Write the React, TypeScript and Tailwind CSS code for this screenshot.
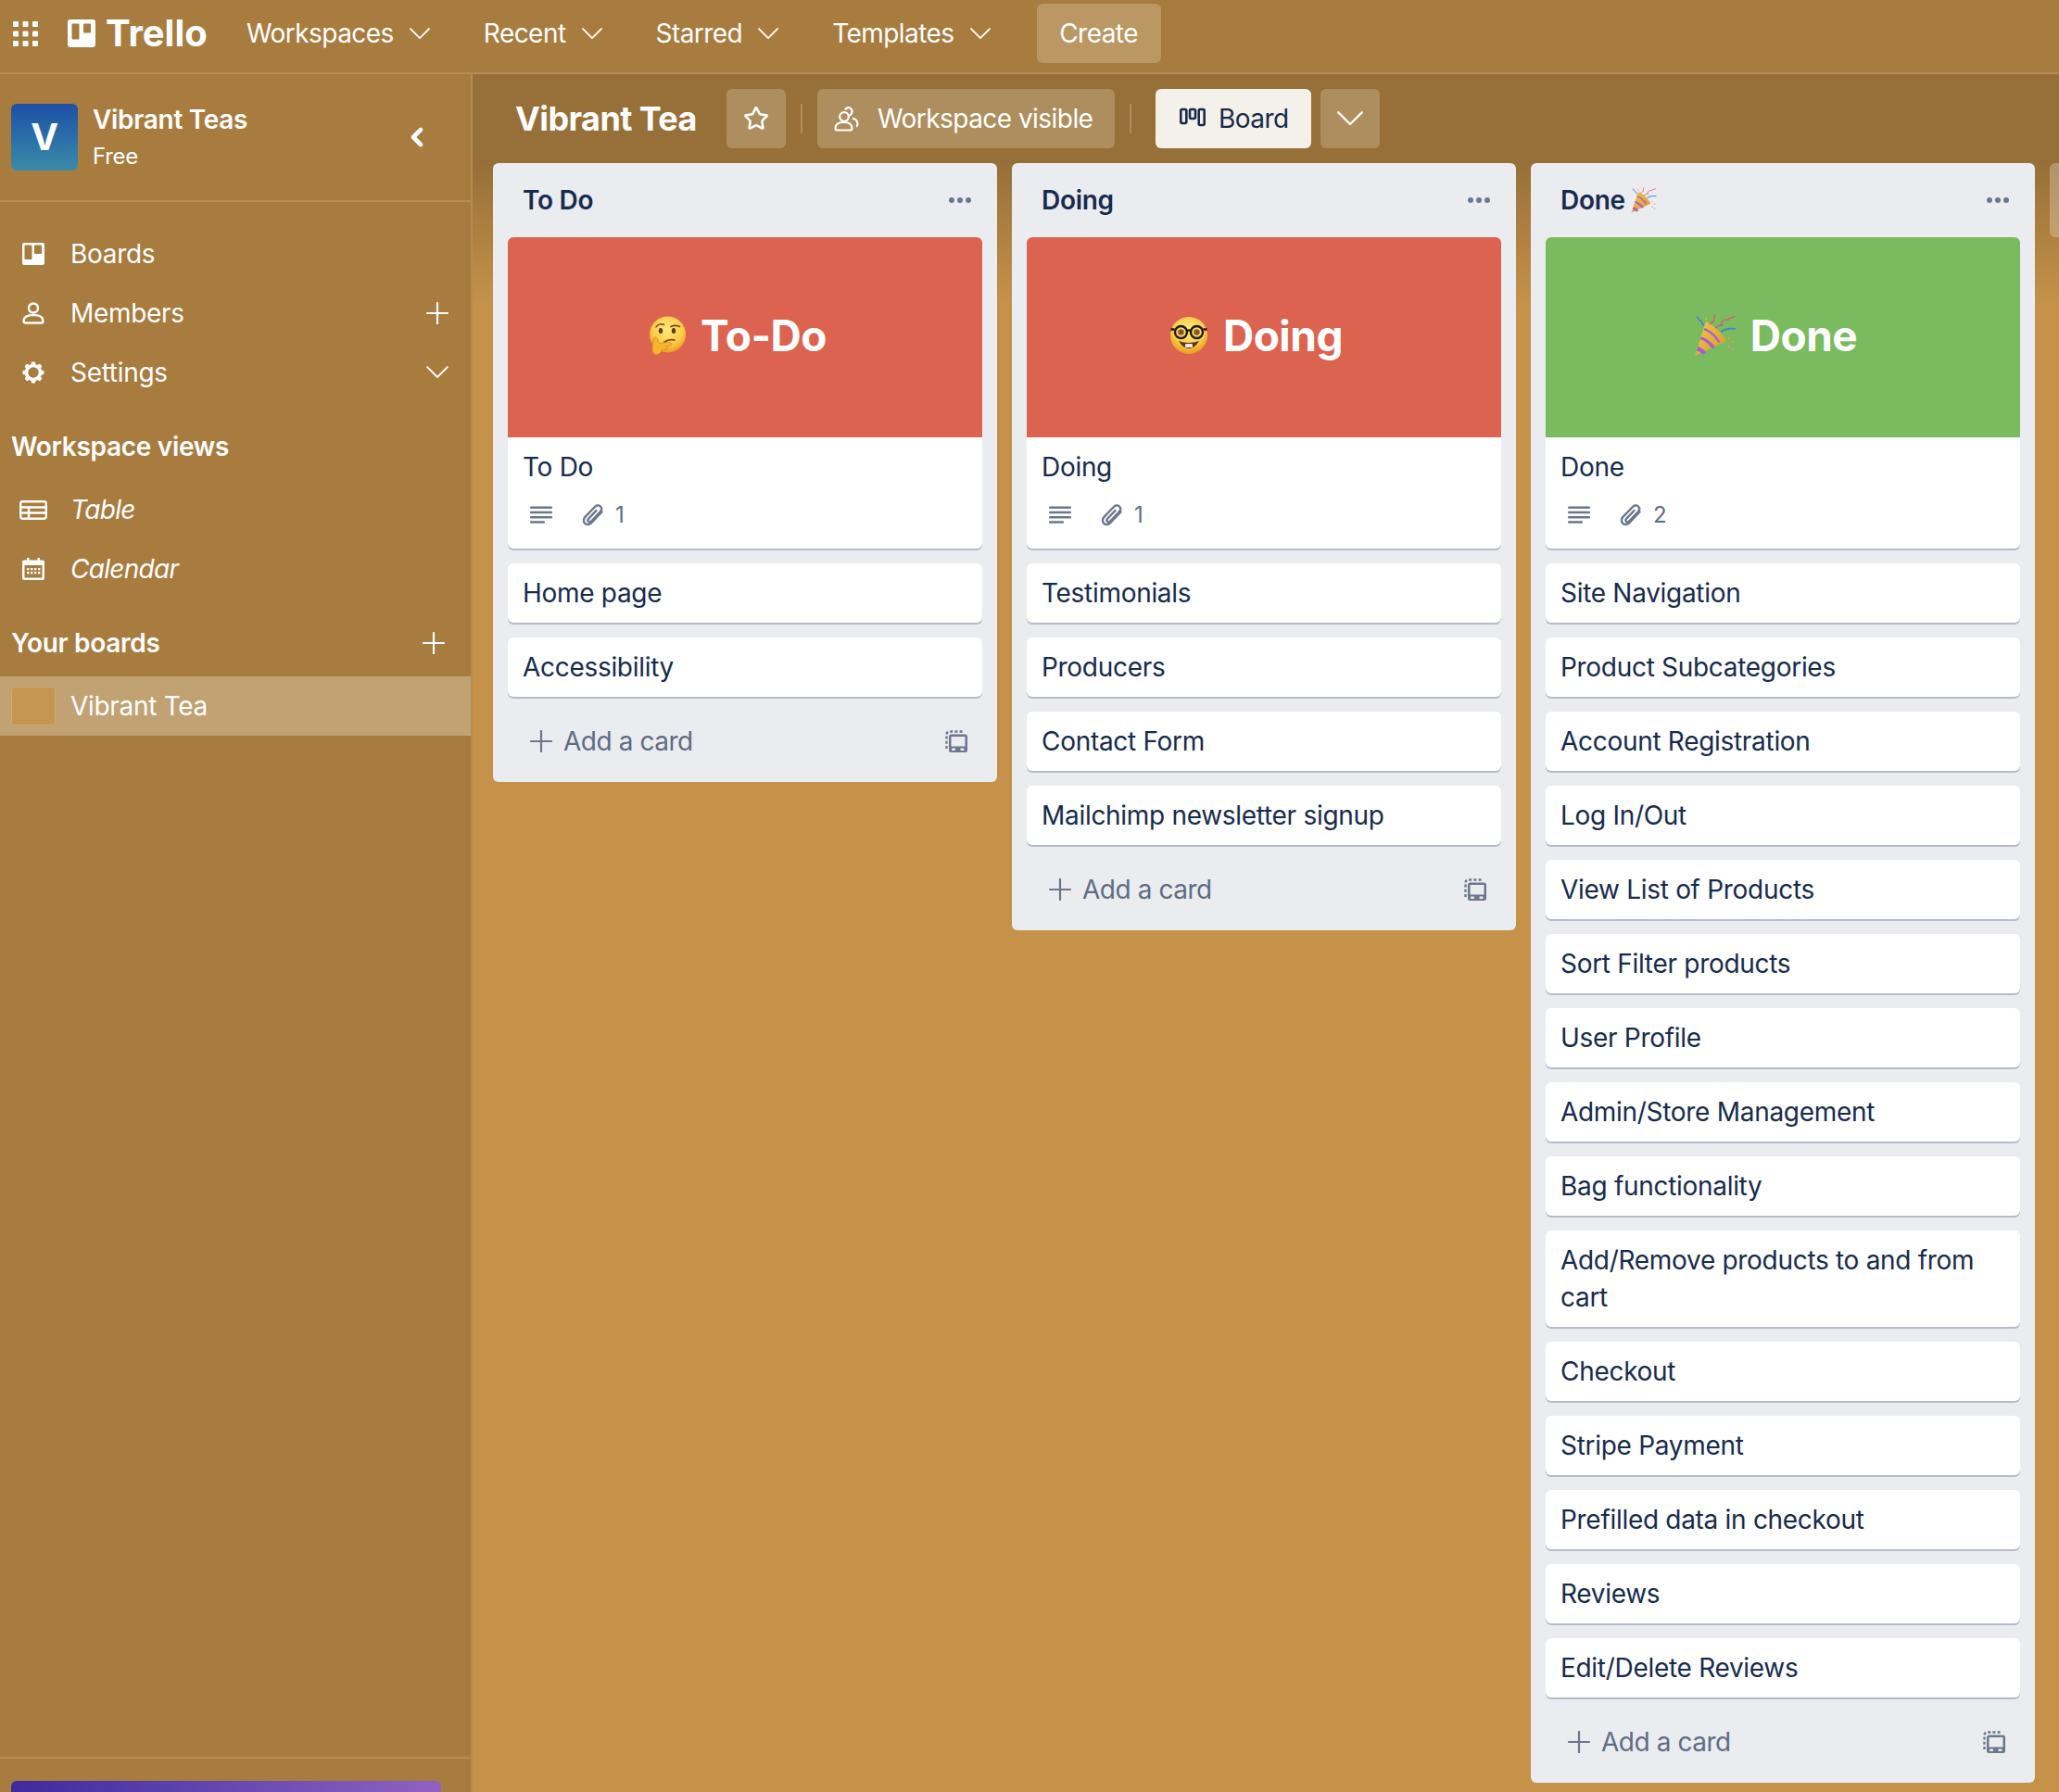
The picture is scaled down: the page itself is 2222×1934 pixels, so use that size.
import { ChevronLeft, Star } from "lucide-react";
import type { ReactNode } from "react";

type CoverKind = "think" | "nerd" | "party";

type ListData = {
  title: string;
  titleEmoji?: boolean;
  cover: { kind: CoverKind; label: string; color: string; gap: string };
  attachments: number;
  cards: string[];
};

const lists: ListData[] = [
  {
    title: "To Do",
    cover: { kind: "think", label: "To-Do", color: "bg-[#dc634f]", gap: "gap-[16px]" },
    attachments: 1,
    cards: ["Home page", "Accessibility"],
  },
  {
    title: "Doing",
    cover: { kind: "nerd", label: "Doing", color: "bg-[#dc634f]", gap: "gap-[17px]" },
    attachments: 1,
    cards: ["Testimonials", "Producers", "Contact Form", "Mailchimp newsletter signup"],
  },
  {
    title: "Done",
    titleEmoji: true,
    cover: { kind: "party", label: "Done", color: "bg-[#79bb5e]", gap: "gap-[15px]" },
    attachments: 2,
    cards: [
      "Site Navigation",
      "Product Subcategories",
      "Account Registration",
      "Log In/Out",
      "View List of Products",
      "Sort Filter products",
      "User Profile",
      "Admin/Store Management",
      "Bag functionality",
      "Add/Remove products to and from cart",
      "Checkout",
      "Stripe Payment",
      "Prefilled data in checkout",
      "Reviews",
      "Edit/Delete Reviews",
    ],
  },
];

const topNav = ["Workspaces", "Recent", "Starred", "Templates"];

function Chevron({ width = 22 }: { width?: number }) {
  return (
    <svg width={width} height={width * 0.55} viewBox="0 0 22 12" fill="none" stroke="currentColor" strokeWidth="1.800" strokeLinecap="round" strokeLinejoin="round" aria-hidden>
      <path d="M1 1l10 10L21 1" />
    </svg>
  );
}

function PlusIcon() {
  return (
    <svg width="24" height="24" viewBox="0 0 24 24" fill="none" stroke="currentColor" strokeWidth="2.200" strokeLinecap="round" aria-hidden>
      <path d="M12 1v22M1 12h22" />
    </svg>
  );
}

function GridIcon() {
  const cells = [0, 10.5, 21];
  return (
    <svg width="27" height="27" viewBox="0 0 27 27" fill="white" aria-hidden>
      {cells.map((y) =>
        cells.map((x) => <rect key={`${x}-${y}`} x={x} y={y} width="6" height="6" rx="1" />),
      )}
    </svg>
  );
}

function TrelloMark() {
  return (
    <svg width="30" height="30" viewBox="0 0 30 30" aria-hidden>
      <path
        fillRule="evenodd"
        fill="white"
        d="M3 0h24a3 3 0 013 3v24a3 3 0 01-3 3H3a3 3 0 01-3-3V3a3 3 0 013-3zm2.5 4.5a1 1 0 00-1 1v15a1 1 0 001 1h6a1 1 0 001-1v-15a1 1 0 00-1-1zm12.500 0a1 1 0 00-1 1v8a1 1 0 001 1h6a1 1 0 001-1v-8a1 1 0 00-1-1z"
      />
    </svg>
  );
}

function BoardsIcon() {
  return (
    <svg width="24" height="24" viewBox="0 0 24 24" aria-hidden>
      <path
        fillRule="evenodd"
        fill="white"
        d="M2 0h20a2 2 0 012 2v20a2 2 0 01-2 2H2a2 2 0 01-2-2V2a2 2 0 012-2zm1.500 2.500a1 1 0 00-1 1v13.500a1 1 0 001 1h6a1 1 0 001-1V3.500a1 1 0 00-1-1zm10.500 0a1 1 0 00-1 1v7.500a1 1 0 001 1h6a1 1 0 001-1V3.500a1 1 0 00-1-1z"
      />
    </svg>
  );
}

function MemberIcon() {
  return (
    <svg width="24" height="24" viewBox="0 0 24 24" fill="none" stroke="white" strokeWidth="2.400" aria-hidden>
      <circle cx="12" cy="6.500" r="5" />
      <path d="M1.500 20.500c0-4.500 4.500-6.500 10.500-6.500s10.500 2 10.500 6.500c0 1.500-1 2-2 2h-17c-1 0-2-.5-2-2z" />
    </svg>
  );
}

function GearIcon() {
  const teeth = [0, 45, 90, 135, 180, 225, 270, 315];
  return (
    <svg width="24" height="24" viewBox="0 0 24 24" aria-hidden>
      <circle cx="12" cy="12" r="7.500" fill="none" stroke="white" strokeWidth="3.600" />
      {teeth.map((deg) => (
        <rect key={deg} x="9.800" y="0.500" width="4.400" height="4.500" rx="1" fill="white" transform={`rotate(${deg} 12 12)`} />
      ))}
    </svg>
  );
}

function TableIcon() {
  return (
    <svg width="30" height="21" viewBox="0 0 30 21" fill="none" stroke="white" strokeWidth="2.400" aria-hidden>
      <rect x="1.200" y="1.200" width="27.600" height="18.600" rx="2.500" />
      <path d="M1 7.500h28M1 13.500h28M10 7.500v12" />
    </svg>
  );
}

function CalendarIcon() {
  const dots = [
    [7, 12],
    [11, 12],
    [15, 12],
    [19, 12],
    [7, 16],
    [11, 16],
    [15, 16],
    [19, 16],
  ];
  return (
    <svg width="24" height="24" viewBox="0 0 24 24" aria-hidden>
      <path
        fillRule="evenodd"
        fill="white"
        d="M5 0h2.500v2.500h9V0H19v2.500h3a2 2 0 012 2V22a2 2 0 01-2 2H2a2 2 0 01-2-2V4.500a2 2 0 012-2h3zM2.500 8v13a.5.5 0 00.5.5h18a.5.5 0 00.5-.5V8z"
      />
      {dots.map(([x, y]) => (
        <rect key={`${x}-${y}`} x={x - 2} y={y - 1} width="2.400" height="2.400" fill="white" />
      ))}
    </svg>
  );
}

function PeopleIcon() {
  return (
    <svg width="27" height="27" viewBox="0 0 27 27" fill="none" stroke="white" strokeWidth="2.200" aria-hidden>
      <circle cx="11" cy="11" r="4.800" />
      <path d="M1.500 23.500c0-4.500 4-6.500 9-6.500s9 2 9 6.500c0 1.500-.8 2-2 2h-14c-1.200 0-2-.5-2-2z" />
      <path d="M12 3.500c1-1.800 2.500-2.500 4-2.300 3 .4 4.300 3.500 3 6-.6 1.200-1.500 2-2.500 2.500M20 12.500c3.500 1 5.500 3.500 5.500 6.500 0 1.200-.5 2-1.500 2.500" />
    </svg>
  );
}

function BoardViewIcon() {
  return (
    <svg width="28" height="24" viewBox="0 0 28 24" fill="none" stroke="#172b4d" strokeWidth="2.600" aria-hidden>
      <rect x="1.300" y="2" width="6" height="15" rx="1.500" />
      <rect x="11" y="2" width="6" height="10" rx="1.500" />
      <rect x="20.700" y="2" width="6" height="17" rx="1.500" />
    </svg>
  );
}

function DescriptionIcon() {
  return (
    <svg width="24" height="20" viewBox="0 0 24 20" fill="#6b778c" aria-hidden>
      <rect y="0.500" width="24" height="2.400" rx="1" />
      <rect y="5.800" width="24" height="2.400" rx="1" />
      <rect y="11" width="24" height="2.400" rx="1" />
      <rect y="16.300" width="16" height="2.400" rx="1" />
    </svg>
  );
}

function ClipIcon() {
  return (
    <svg width="24" height="24" viewBox="0 0 24 24" fill="none" stroke="#6b778c" strokeWidth="2.400" strokeLinecap="round" aria-hidden>
      <path d="M21.500 8.500L10.500 20c-2.200 2.400-5.200 2.700-7.200.8-2-1.900-1.700-4.900.4-7.100L14 3c1.700-1.800 4.100-2.200 5.900-.5 1.800 1.700 1.500 4-.1 5.800l-9.700 10.200c-.9 1-2.200 1.100-3.100.3-.9-.9-.7-2.100.2-3.100l8.200-8.600" />
    </svg>
  );
}

function TemplateIcon() {
  return (
    <svg width="24" height="24" viewBox="0 0 24 24" aria-hidden>
      <path
        fill="none"
        stroke="#6b778c"
        strokeWidth="2.400"
        strokeDasharray="3 2.200"
        d="M1.500 20V4.500a3 3 0 013-3H20"
      />
      <path
        fillRule="evenodd"
        fill="#6b778c"
        d="M6.500 4.500h15a2.500 2.500 0 012.500 2.500v14.500a2.500 2.500 0 01-2.500 2.500h-15A2.500 2.500 0 014 21.500V7a2.500 2.500 0 012.500-2.500zm0 2.500v10.500h15V7zM8 19.500a1.200 1.200 0 100 2.400h2a1.200 1.200 0 100-2.400zm9.500 0a1.200 1.200 0 100 2.400h2a1.200 1.200 0 100-2.400z"
      />
    </svg>
  );
}

function ThinkingFace({ idPrefix }: { idPrefix: string }) {
  return (
    <svg width="40" height="42" viewBox="0 0 40 42" aria-hidden>
      <defs>
        <radialGradient id={`${idPrefix}-face`} cx="50%" cy="35%" r="65%">
          <stop offset="0%" stopColor="#fde97a" />
          <stop offset="65%" stopColor="#fbcb46" />
          <stop offset="100%" stopColor="#eb9f22" />
        </radialGradient>
      </defs>
      <circle cx="20.500" cy="20" r="19.500" fill={`url(#${idPrefix}-face)`} />
      <path d="M8 12c2-3.500 6-4 8.500-2.500" fill="none" stroke="#7a4a12" strokeWidth="1.500" strokeLinecap="round" />
      <path d="M24 11.500c3-1.500 7-1 9.500 0" fill="none" stroke="#7a4a12" strokeWidth="1.800" strokeLinecap="round" />
      <ellipse cx="13" cy="16" rx="2.200" ry="3" fill="#5b3610" />
      <ellipse cx="27" cy="16" rx="2.200" ry="3" fill="#5b3610" />
      <path d="M17 28c3-2 7-3 11-2" fill="none" stroke="#7a4a12" strokeWidth="1.800" strokeLinecap="round" />
      <path
        d="M7 23c2 0 2.500 2 3.500 5l1.500 1.800c3-.8 7-1.500 11-1.300 2.500.2 2.500 2.500.5 3l-5 1c2.500.3 3 2.500 1 3.200l-5 1c-1 2.500-3.500 5-6.500 4.800-3.500-.3-4-4-3.800-8 .1-3.500 1-10.500 2.800-10.500z"
        fill="#f7b52f"
        stroke="#d98a1c"
        strokeWidth="0.800"
      />
    </svg>
  );
}

function NerdFace({ idPrefix }: { idPrefix: string }) {
  return (
    <svg width="40" height="40" viewBox="0 0 40 40" aria-hidden>
      <defs>
        <radialGradient id={`${idPrefix}-face`} cx="50%" cy="35%" r="65%">
          <stop offset="0%" stopColor="#fde97a" />
          <stop offset="65%" stopColor="#fbcb46" />
          <stop offset="100%" stopColor="#e59a24" />
        </radialGradient>
      </defs>
      <circle cx="20" cy="20" r="20" fill={`url(#${idPrefix}-face)`} />
      <path d="M9 26c3.500 6 7.500 8 11 8s7.500-2 11-8c-7 2.500-15 2.500-22 0z" fill="#5b3610" />
      <rect x="16" y="29" width="8" height="4" rx="1" fill="#e8e8e8" />
      <circle cx="11.500" cy="16.500" r="6.500" fill="#fbd96a" stroke="#1c1a17" strokeWidth="2.400" />
      <circle cx="28.500" cy="16.500" r="6.500" fill="#fbd96a" stroke="#1c1a17" strokeWidth="2.400" />
      <path d="M0.500 13.500h4M18 15c1.300-.8 2.700-.8 4 0M35.500 13.500h4" stroke="#1c1a17" strokeWidth="2.400" />
      <circle cx="11.500" cy="16.500" r="3.200" fill="#8a5a1c" />
      <circle cx="28.500" cy="16.500" r="3.200" fill="#8a5a1c" />
    </svg>
  );
}

function PartyPopper({ size, idPrefix }: { size: number; idPrefix: string }) {
  return (
    <svg width={size} height={size} viewBox="0 0 46 46" aria-hidden>
      <defs>
        <linearGradient id={`${idPrefix}-cone`} x1="0" y1="0" x2="1" y2="1">
          <stop offset="0%" stopColor="#f4c84a" />
          <stop offset="100%" stopColor="#d9962b" />
        </linearGradient>
      </defs>
      <path d="M1 45L13 8c6 3 18 12 22 21z" fill={`url(#${idPrefix}-cone)`} />
      <path d="M4.500 35c3 .8 7 3.500 9 7l-4 1.500c-2-2-4-3.500-6.500-4zM8 24.500c6 1.500 12 6.500 15 11.500l-3.500 1.300c-3-4.500-8-8.800-13-10.200z" fill="#a45fd0" />
      <path d="M11.500 15c6 2 13 8 17 15l-2.200.8c-3.500-6-9.500-11.500-15.500-13.500z" fill="#a45fd0" />
      <path d="M17 11c3-3 6-3 5-7-.5-2 0-2.500 1-3.500M23 15c6-3 7-5 9-9" fill="none" stroke="#e5566c" strokeWidth="1.400" />
      <path d="M3 3c3 0 1 3 4 4s1 4 4 5M29 19c5-3 10-4 16-3" fill="none" stroke="#3f7fe0" strokeWidth="1.600" />
      <path d="M33 7c2-3 3 1 5-2s3 1 6-3" fill="none" stroke="#e5566c" strokeWidth="1.400" />
      <circle cx="38" cy="26" r="1" fill="#e5a33c" />
      <circle cx="42" cy="30" r="1.100" fill="#e5a33c" />
      <circle cx="38" cy="35" r="1.200" fill="#e88ab0" />
      <circle cx="42" cy="38" r="1.100" fill="#e88ab0" />
      <circle cx="13" cy="5" r="1.200" fill="#9ccf4e" />
      <circle cx="30" cy="12" r="1.100" fill="#3f7fe0" />
    </svg>
  );
}

function CoverEmoji({ kind, idPrefix }: { kind: CoverKind; idPrefix: string }) {
  if (kind === "think") return <ThinkingFace idPrefix={idPrefix} />;
  if (kind === "nerd") return <NerdFace idPrefix={idPrefix} />;
  return <PartyPopper size={46} idPrefix={idPrefix} />;
}

function SideRow({ icon, label, italic, action }: { icon: ReactNode; label: string; italic?: boolean; action?: ReactNode }) {
  return (
    <div className="flex h-16 items-center">
      <div className="flex w-[76px] justify-center pr-[4px]">{icon}</div>
      <span className={italic ? "italic tracking-[-0.7px]" : ""}>{label}</span>
      {action && <div className="ml-auto mr-6 flex">{action}</div>}
    </div>
  );
}

function Sidebar() {
  return (
    <aside className="flex h-full w-[510px] shrink-0 flex-col overflow-hidden border-r-2 border-[#b58d52] bg-[#a87b3e] text-[28px] leading-10 tracking-[-0.3px] text-white">
      <div className="flex h-[138px] shrink-0 items-center border-b-2 border-[#b58d52] pl-3">
        <div className="flex h-[72px] w-[72px] items-center justify-center rounded-md bg-gradient-to-b from-[#1f4ea6] to-[#3c8ba8] text-[40px] font-bold">
          V
        </div>
        <div className="ml-4 flex flex-col">
          <span className="font-semibold leading-9">Vibrant Teas</span>
          <span className="mt-[6px] text-[24px] leading-8">Free</span>
        </div>
        <ChevronLeft className="ml-auto mr-[42px] h-8 w-8" strokeWidth={3.5} />
      </div>

      <div className="flex flex-col pt-6">
        <SideRow icon={<BoardsIcon />} label="Boards" />
        <SideRow icon={<MemberIcon />} label="Members" action={<PlusIcon />} />
        <SideRow icon={<GearIcon />} label="Settings" action={<Chevron width={24} />} />

        <div className="mt-4 flex h-16 items-center pl-3 font-semibold">Workspace views</div>
        <div className="mt-1">
          <SideRow icon={<TableIcon />} label="Table" italic />
          <SideRow icon={<CalendarIcon />} label="Calendar" italic />
        </div>

        <div className="mt-4 flex h-16 items-center justify-between pl-3 pr-7 font-semibold">
          Your boards
          <PlusIcon />
        </div>
        <div className="mt-1 flex h-16 items-center bg-[#c0a273] pl-3">
          <div className="h-[42px] w-12 rounded border border-[#cfa977] bg-[#c6954f]" />
          <span className="ml-4">Vibrant Tea</span>
        </div>
      </div>

      <div className="mt-auto h-[38px] shrink-0 border-t-2 border-[#b58d52] pl-3 pt-6">
        <div className="h-14 w-[464px] rounded-md bg-gradient-to-r from-[#3e2a9e] to-[#9161c2]" />
      </div>
    </aside>
  );
}

function Card({ text }: { text: string }) {
  return (
    <div className="rounded-md bg-white px-4 py-3 shadow-[0_2px_0_#b6bacb]">
      {text}
    </div>
  );
}

function List({ list }: { list: ListData }) {
  const key = list.title.toLowerCase().replace(/\s/g, "");
  return (
    <section className="flex w-[544px] shrink-0 flex-col self-start rounded-md bg-[#ebecf0] px-4 pb-3 text-[28px] leading-10 tracking-[-0.3px] text-[#172b4d]">
      <div className="flex h-20 items-center justify-between pl-4 pr-3">
        <div className="flex items-center gap-[6px] font-semibold">
          {list.title}
          {list.titleEmoji && <PartyPopper size={28} idPrefix={`${key}-small`} />}
        </div>
        <div className="flex gap-[3px]">
          <span className="h-[6px] w-[6px] rounded-full bg-[#6b778c]" />
          <span className="h-[6px] w-[6px] rounded-full bg-[#6b778c]" />
          <span className="h-[6px] w-[6px] rounded-full bg-[#6b778c]" />
        </div>
      </div>

      <div className="flex flex-col gap-4">
        <div className="overflow-hidden rounded-md bg-white shadow-[0_2px_0_#b6bacb]">
          <div className={`flex h-[216px] items-center justify-center pb-1 pr-[16px] ${list.cover.color} ${list.cover.gap} text-[46px] font-bold tracking-[-0.5px] text-white`}>
            <CoverEmoji kind={list.cover.kind} idPrefix={key} />
            {list.cover.label}
          </div>
          <div className="px-4 pb-6 pt-3">
            {list.title}
            <div className="mt-5 flex h-6 items-center pl-2 text-[24px] leading-none text-[#5e6c84]">
              <DescriptionIcon />
              <span className="ml-8">
                <ClipIcon />
              </span>
              <span className="ml-3">{list.attachments}</span>
            </div>
          </div>
        </div>
        {list.cards.map((c) => (
          <Card key={c} text={c} />
        ))}
      </div>

      <div className="mt-4 flex h-16 items-center justify-between pl-6 pr-4 text-[#5e6c84]">
        <div className="flex items-center gap-3 tracking-[-0.45px]">
          <span className="text-[#6b778c]">
            <PlusIcon />
          </span>
          Add a card
        </div>
        <TemplateIcon />
      </div>
    </section>
  );
}

function BoardHeader() {
  const button = "flex h-16 items-center rounded-md bg-[#ae8e5e] text-white";
  return (
    <div className="flex h-24 shrink-0 items-center pl-[46px] text-[28px] tracking-[-0.55px]">
      <h1 className="w-[195px] whitespace-nowrap text-[36px] font-bold tracking-[-0.6px] text-white">Vibrant Tea</h1>
      <button className={`${button} ml-[33px] w-16 justify-center`}>
        <Star className="h-7 w-7" strokeWidth={2.2} />
      </button>
      <span className="mx-4 h-8 w-[2px] bg-[#ae8e5e]" />
      <button className={`${button} w-[321px] gap-5 pl-[18px]`}>
        <PeopleIcon />
        Workspace visible
      </button>
      <span className="ml-4 mr-[26px] h-8 w-[2px] bg-[#ae8e5e]" />
      <button className="flex h-16 w-[168px] items-center gap-[14px] rounded-md bg-[#f4f1ea] pl-[26px] text-[#172b4d]">
        <BoardViewIcon />
        Board
      </button>
      <button className={`${button} ml-[10px] w-16 justify-center`}>
        <Chevron width={28} />
      </button>
    </div>
  );
}

export default function App() {
  return (
    <div className="flex h-screen flex-col overflow-hidden font-['Inter',sans-serif]">
      <header className="flex h-20 shrink-0 items-center border-b-2 border-[#b58d52] bg-[#a87b3e] pb-[6px] text-[28px] tracking-[-0.55px] text-white">
        <div className="ml-[14px]">
          <GridIcon />
        </div>
        <div className="ml-[32px] flex items-center gap-[11px]">
          <TrelloMark />
          <span className="w-[108px] text-[40px] font-bold leading-none tracking-normal">Trello</span>
        </div>
        <nav className="ml-[44px] flex items-center gap-[58px]">
          {topNav.map((item) => (
            <div key={item} className="flex items-center gap-[17px]">
              {item}
              <Chevron />
            </div>
          ))}
        </nav>
        <button className="ml-[50px] flex h-16 w-[134px] items-center justify-center rounded-md bg-[#ba9763]">
          Create
        </button>
      </header>

      <div className="flex min-h-0 flex-1">
        <Sidebar />
        <main className="flex min-w-0 flex-1 flex-col overflow-hidden bg-[linear-gradient(#967038_0px,#967038_96px,#c6924a_250px)]">
          <BoardHeader />
          <div className="flex gap-4 pl-[22px]">
            {lists.map((list) => (
              <List key={list.title} list={list} />
            ))}
            <div className="h-20 w-[200px] shrink-0 self-start rounded-md bg-white/25" />
          </div>
        </main>
      </div>
    </div>
  );
}
